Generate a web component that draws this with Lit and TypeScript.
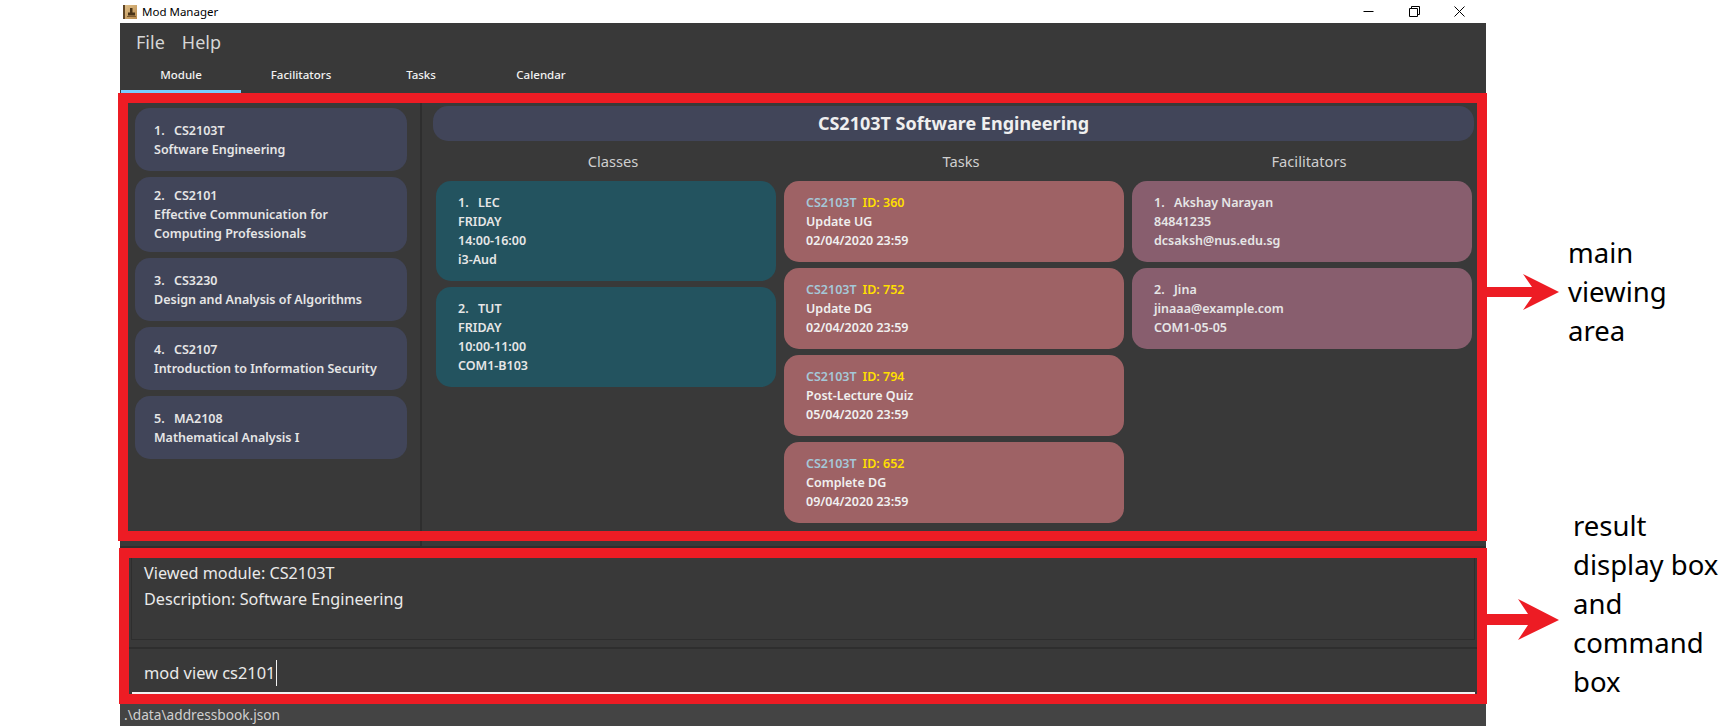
import { LitElement, html, css } from "lit";
import { customElement } from "lit/decorators.js";

const modules = [
  { code: "CS2103T", lines: ["Software Engineering"] },
  { code: "CS2101", lines: ["Effective Communication for", "Computing Professionals"] },
  { code: "CS3230", lines: ["Design and Analysis of Algorithms"] },
  { code: "CS2107", lines: ["Introduction to Information Security"] },
  { code: "MA2108", lines: ["Mathematical Analysis I"] },
];

const classes = [
  { name: "LEC", day: "FRIDAY", time: "14:00-16:00", venue: "i3-Aud" },
  { name: "TUT", day: "FRIDAY", time: "10:00-11:00", venue: "COM1-B103" },
];

const tasks = [
  { id: 360, name: "Update UG", due: "02/04/2020 23:59" },
  { id: 752, name: "Update DG", due: "02/04/2020 23:59" },
  { id: 794, name: "Post-Lecture Quiz", due: "05/04/2020 23:59" },
  { id: 652, name: "Complete DG", due: "09/04/2020 23:59" },
];

const facilitators = [
  { name: "Akshay Narayan", lines: ["84841235", "dcsaksh@nus.edu.sg"] },
  { name: "Jina", lines: ["jinaaa@example.com", "COM1-05-05"] },
];

@customElement("app-root")
export class AppRoot extends LitElement {
  static styles = css`
    :host {
      display: block;
      position: relative;
      width: 1731px;
      height: 726px;
      overflow: hidden;
      background: #fff;
      font-family: "Noto Sans", "Open Sans", sans-serif;
    }

    /* title bar */
    .titlebar {
      height: 23px;
      padding: 0 0 0 123px;
      display: flex;
      align-items: center;
      color: #000;
      font-size: 11.5px;
    }
    .titlebar svg.icon { margin-right: 5px; }
    .controls {
      margin-left: 1145px;
      display: flex;
      gap: 34.5px;
    }

    /* window */
    .window {
      margin-left: 120px;
      width: 1366px;
      height: 703px;
      background: #393939;
      display: flex;
      flex-direction: column;
    }
    .menubar {
      height: 37px;
      padding-left: 16px;
      display: flex;
      align-items: center;
      gap: 17px;
      color: #d6d6d6;
      font-size: 18px;
    }
    .tabs {
      height: 33px;
      display: flex;
      padding-left: 1px;
    }
    .tab {
      width: 120px;
      height: 30px;
      box-sizing: border-box;
      padding-bottom: 2px;
      display: flex;
      align-items: center;
      justify-content: center;
      color: #f2f2f2;
      font-size: 11.5px;
      font-weight: 500;
    }
    .tab.active {
      height: 33px;
      border-bottom: 3px solid #7accff;
    }

    .main {
      height: 453px;
      display: flex;
      border-bottom: 2px solid #2e2e2e;
    }
    .modules {
      width: 302px;
      box-sizing: border-box;
      padding: 15px 13px 0 15px;
      border-right: 2px solid #2e2e2e;
      display: flex;
      flex-direction: column;
      gap: 6px;
    }
    .card {
      box-sizing: border-box;
      border-radius: 15px;
      padding: 12px 22px;
      font-size: 12.5px;
      line-height: 19px;
      font-weight: 600;
      color: #e6e6e6;
      white-space: nowrap;
    }
    .card .num {
      display: inline-block;
      width: 20px;
    }
    .module {
      background: #414559;
      padding: 12.5px 19px;
    }
    .module.tall { padding: 9px 19px; }
    .class { background: #23535f; }
    .task { background: #9e6265; color: #f0f0f0; }
    .facilitator { background: #885e6e; }
    .task .code { color: #a5c8d8; margin-right: 6px; }
    .task .tid { color: #ffdf00; }

    .detail {
      flex: 1;
      padding: 13px 12px 0 11px;
    }
    .header {
      height: 35px;
      box-sizing: border-box;
      padding-bottom: 2px;
      border-radius: 15px;
      background: #414559;
      display: flex;
      align-items: center;
      justify-content: center;
      color: #efefef;
      font-size: 18px;
      font-weight: 700;
    }
    .columns {
      display: grid;
      grid-template-columns: 340px 340px 340px;
      column-gap: 8px;
      padding-left: 3px;
    }
    .column {
      display: flex;
      flex-direction: column;
      gap: 6px;
    }
    .column h2 {
      margin: 0 -7px 0 7px;
      height: 34px;
      box-sizing: border-box;
      padding-top: 5px;
      display: flex;
      align-items: center;
      justify-content: center;
      color: #cfcfcf;
      font-size: 14.7px;
      font-weight: 400;
    }

    .result {
      height: 101px;
      box-sizing: border-box;
      padding: 0 11px 7px;
      border-bottom: 2px solid #2e2e2e;
      display: flex;
    }
    .result-box {
      flex: 1;
      border: 1px solid #2e2e2e;
      padding: 11px 12px 0;
      color: #eaeaea;
      font-size: 16.2px;
      line-height: 26px;
    }
    .command {
      height: 55px;
      box-sizing: border-box;
      padding: 0 11px 10px 12px;
      display: flex;
    }
    .command-input {
      flex: 1;
      padding: 4px 0 0 12px;
      display: flex;
      align-items: center;
      border-bottom: 2px solid #f2f2f2;
      color: #eaeaea;
      font-size: 16.4px;
    }
    .caret {
      width: 1px;
      height: 26px;
      margin-left: 1px;
      background: #f2f2f2;
    }
    .status {
      height: 22px;
      box-sizing: border-box;
      padding: 0 0 2px 4px;
      display: flex;
      align-items: center;
      background: #444;
      color: #d0d0d0;
      font-size: 13.7px;
    }

    /* annotations laid over the screenshot */
    .redbox {
      position: absolute;
      box-sizing: border-box;
      border: 10px solid #ed1c24;
    }
    .redbox.one { left: 118px; top: 93px; width: 1369px; height: 448px; }
    .redbox.two { left: 119px; top: 548px; width: 1368px; height: 156px; }
    .arrows {
      position: absolute;
      left: 0;
      top: 0;
      pointer-events: none;
    }
    .note {
      position: absolute;
      color: #000;
      font-size: 27.5px;
      line-height: 39px;
    }
    .note.one { left: 1568px; top: 233px; }
    .note.two { left: 1573px; top: 506px; }
  `;

  renderTitlebar() {
    return html`
      <div class="titlebar">
        <svg class="icon" width="14" height="14" viewBox="0 0 14 14">
          <defs>
            <linearGradient id="book" x1="0" y1="0" x2="1" y2="1">
              <stop offset="0" stop-color="#e3c48f"></stop>
              <stop offset="1" stop-color="#b98a4c"></stop>
            </linearGradient>
          </defs>
          <rect width="14" height="14" fill="url(#book)"></rect>
          <rect width="2" height="14" fill="#5f4526"></rect>
          <path d="M7 3h2.500v4.500h2.500v3H5v-3h2z" fill="#4a3418"></path>
          <rect x="4" y="11" width="9" height="1" fill="#7d5a30"></rect>
        </svg>
        <span>Mod Manager</span>
        <div class="controls">
          <svg width="11" height="11" viewBox="0 0 11 11">
            <path d="M0.500 5.500h10" stroke="#000" fill="none"></path>
          </svg>
          <svg width="11" height="11" viewBox="0 0 11 11">
            <path d="M0.500 2.500h8v8h-8zM2.500 2.500v-2h8v8h-2" stroke="#000" fill="none"></path>
          </svg>
          <svg width="11" height="11" viewBox="0 0 11 11">
            <path d="M0.500 0.500l10 10M10.500 0.500l-10 10" stroke="#000" fill="none"></path>
          </svg>
        </div>
      </div>
    `;
  }

  renderDetail() {
    return html`
      <div class="detail">
        <div class="header">CS2103T Software Engineering</div>
        <div class="columns">
          <div class="column">
            <h2>Classes</h2>
            ${classes.map((c, i) => html`
              <div class="card class">
                <div><span class="num">${i + 1}.</span>${c.name}</div>
                <div>${c.day}</div>
                <div>${c.time}</div>
                <div>${c.venue}</div>
              </div>
            `)}
          </div>
          <div class="column">
            <h2>Tasks</h2>
            ${tasks.map((t) => html`
              <div class="card task">
                <div><span class="code">CS2103T</span><span class="tid">ID: ${t.id}</span></div>
                <div>${t.name}</div>
                <div>${t.due}</div>
              </div>
            `)}
          </div>
          <div class="column">
            <h2>Facilitators</h2>
            ${facilitators.map((f, i) => html`
              <div class="card facilitator">
                <div><span class="num">${i + 1}.</span>${f.name}</div>
                ${f.lines.map((l) => html`<div>${l}</div>`)}
              </div>
            `)}
          </div>
        </div>
      </div>
    `;
  }

  render() {
    return html`
      ${this.renderTitlebar()}
      <div class="window">
        <div class="menubar"><span>File</span><span>Help</span></div>
        <div class="tabs">
          <div class="tab active">Module</div>
          <div class="tab">Facilitators</div>
          <div class="tab">Tasks</div>
          <div class="tab">Calendar</div>
        </div>
        <div class="main">
          <div class="modules">
            ${modules.map((m, i) => html`
              <div class="card module ${m.lines.length > 1 ? "tall" : ""}">
                <div><span class="num">${i + 1}.</span>${m.code}</div>
                ${m.lines.map((l) => html`<div>${l}</div>`)}
              </div>
            `)}
          </div>
          ${this.renderDetail()}
        </div>
        <div class="result">
          <div class="result-box">
            <div>Viewed module: CS2103T</div>
            <div>Description: Software Engineering</div>
          </div>
        </div>
        <div class="command">
          <div class="command-input"><span>mod view cs2101</span><span class="caret"></span></div>
        </div>
        <div class="status">.\\data\\addressbook.json</div>
      </div>

      <div class="redbox one"></div>
      <div class="redbox two"></div>
      <svg class="arrows" width="1731" height="726">
        <path d="M1487 287H1532L1523 274L1559 292L1523 310L1532 297H1487z" fill="#ed1c24"></path>
        <path d="M1487 614H1528L1518 599L1559 620L1518 640L1528 625H1487z" fill="#ed1c24"></path>
      </svg>
      <div class="note one">main<br />viewing<br />area</div>
      <div class="note two">result<br />display box<br />and<br />command<br />box</div>
    `;
  }
}
